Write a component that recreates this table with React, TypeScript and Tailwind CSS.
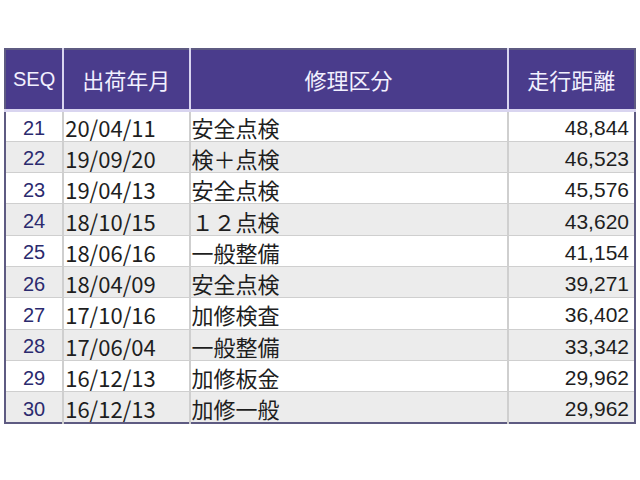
const rows = [
  { seq: 21, date: "20/04/11", kind: "安全点検", km: "48,844" },
  { seq: 22, date: "19/09/20", kind: "検＋点検", km: "46,523" },
  { seq: 23, date: "19/04/13", kind: "安全点検", km: "45,576" },
  { seq: 24, date: "18/10/15", kind: "１２点検", km: "43,620" },
  { seq: 25, date: "18/06/16", kind: "一般整備", km: "41,154" },
  { seq: 26, date: "18/04/09", kind: "安全点検", km: "39,271" },
  { seq: 27, date: "17/10/16", kind: "加修検査", km: "36,402" },
  { seq: 28, date: "17/06/04", kind: "一般整備", km: "33,342" },
  { seq: 29, date: "16/12/13", kind: "加修板金", km: "29,962" },
  { seq: 30, date: "16/12/13", kind: "加修一般", km: "29,962" },
];

const jp = "font-['Noto_Sans_CJK_JP',sans-serif]";
const latin = "font-['Liberation_Sans','Noto_Sans_CJK_JP',sans-serif]";

export default function App() {
  return (
    <div className="w-[640px] h-[480px] bg-white pt-[48px] pl-[4px]">
      <table className="w-[632px] table-fixed border-collapse border-2 border-[#5e5b82]">
        <colgroup>
          <col className="w-[58px]" />
          <col className="w-[126px]" />
          <col className="w-[317px]" />
          <col className="w-[127px]" />
        </colgroup>
        <thead>
          <tr className="h-[61px] bg-[#4a3c8c] text-[#f2f0ff] border-b-[3px] border-[#d9d5f0]">
            <th className={`${latin} text-[20px] font-normal border-r-2 border-[#d9d5f0]`}>SEQ</th>
            <th className={`${jp} text-[22px] font-normal border-r-2 border-[#d9d5f0]`}>出荷年月</th>
            <th className={`${jp} text-[22px] font-normal border-r-2 border-[#d9d5f0]`}>修理区分</th>
            <th className={`${jp} text-[22px] font-normal`}>走行距離</th>
          </tr>
        </thead>
        <tbody>
          {rows.map((r, i) => (
            <tr
              key={r.seq}
              className={`h-[31.3px] border-b border-[#cfcfcf] ${i % 2 === 1 ? "bg-[#ececec]" : "bg-white"}`}
            >
              <td className={`${latin} text-[20px] leading-none text-center text-[#2b2a6e] border-r-2 border-[#cfcfcf] pt-[3px]`}>
                {r.seq}
              </td>
              <td className={`${jp} text-[22px] leading-none text-[#1e1e1e] pl-[1px] border-r-2 border-[#cfcfcf] pt-[2px]`}>
                {r.date}
              </td>
              <td className={`${jp} text-[22px] leading-none text-[#1e1e1e] pl-[1px] border-r-2 border-[#cfcfcf] pt-[2px]`}>
                {r.kind}
              </td>
              <td className={`${latin} text-[21px] leading-none text-right text-[#1e1e1e] pr-[5px] pt-[3px]`}>
                {r.km}
              </td>
            </tr>
          ))}
        </tbody>
      </table>
    </div>
  );
}
